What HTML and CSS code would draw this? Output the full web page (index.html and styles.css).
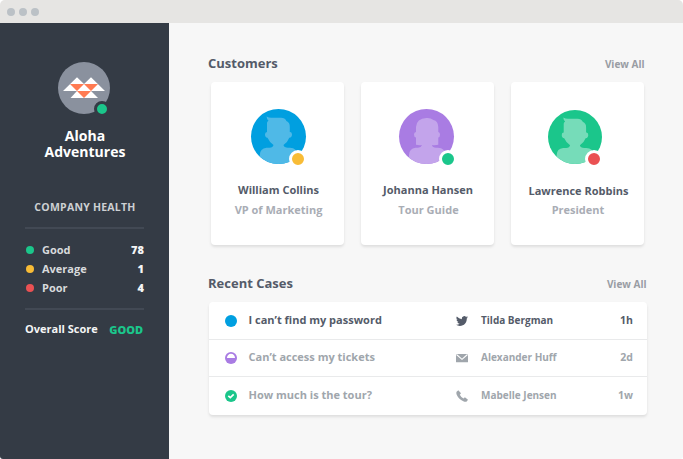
FILE: index.html
```html
<!DOCTYPE html>
<html lang="en">
<head>
<meta charset="utf-8">
<title>Aloha Adventures</title>
<link rel="stylesheet" href="styles.css">
</head>
<body>
<svg class="defs" width="0" height="0" aria-hidden="true">
  <defs>
    <clipPath id="disc"><circle cx="27.5" cy="27.5" r="27.5"/></clipPath>
    <symbol id="man" viewBox="0 0 55 55">
      <path clip-path="url(#disc)" d="M15.6 7.6Q18 9 21 8.8H30Q34 8.8 35.4 12Q39 13.500 38.800 18V23Q41 22.600 41 25.500Q41 28.600 38.300 28.800Q36.500 33.500 32.500 36Q33 38.800 37 38.800H39Q46 39 46.500 46V55H8.800V46Q9 39.500 15.500 38.800H18.500Q22 38.500 22.500 36Q18.300 33 16.500 28.800Q14 28.500 14 25.500Q14 23 16 23V14Q16 12.500 17.500 11.800Q15.600 10 15.600 7.600Z"/>
    </symbol>
    <symbol id="woman" viewBox="0 0 55 55">
      <path clip-path="url(#disc)" d="M27.500 9Q31 8.500 34.500 11Q39 12 39.300 18V23Q41 23 41 25.500Q41 28.300 39.300 28.500V35.800Q36 36.500 33 36Q33.500 38.600 37 38.800H39Q46 39 46.500 46V55H10V46Q10.300 39.500 16.500 38.800H19Q22.300 38.500 23 36Q20 36.500 17 35.800V28.500Q15 28.300 15 25.500Q15 23 17 23V18Q17.500 9.500 27.500 9Z"/>
    </symbol>
  </defs>
</svg>
<div class="window">
  <header class="titlebar"><i></i><i></i><i></i></header>
  <div class="body">
    <aside class="sidebar">
      <div class="logo">
        <svg width="52" height="52" viewBox="0 0 52 52">
          <circle cx="26" cy="26" r="26" fill="#8a919e"/>
          <path fill="#fff" d="M5 29 19 15.300 26 22 33 15.300 47 29Z"/>
          <path fill="#fff" d="M12.500 36 19 29H33L40 36Z"/>
          <path fill="#ff7b52" d="M12 22H26L19 29ZM26 22H40L33 29ZM19 29H33L26 36Z"/>
        </svg>
        <span class="status status-dark good"></span>
      </div>
      <h1>Aloha<br>Adventures</h1>
      <h2>COMPANY HEALTH</h2>
      <ul class="health">
        <li><i class="good"></i><span>Good</span><b>78</b></li>
        <li><i class="average"></i><span>Average</span><b>1</b></li>
        <li><i class="poor"></i><span>Poor</span><b>4</b></li>
      </ul>
      <div class="score"><span>Overall Score</span><strong>GOOD</strong></div>
    </aside>
    <main>
      <div class="heading"><h3>Customers</h3><a class="view">View All</a></div>
      <section class="cards">
        <article class="card">
          <div class="avatar blue"><svg width="55" height="55"><use href="#man"/></svg><span class="status average"></span></div>
          <h4>William Collins</h4><p>VP of Marketing</p>
        </article>
        <article class="card">
          <div class="avatar purple"><svg width="55" height="55"><use href="#woman"/></svg><span class="status good"></span></div>
          <h4>Johanna Hansen</h4><p>Tour Guide</p>
        </article>
        <article class="card card-low">
          <div class="avatar green"><svg width="54" height="54"><use href="#man"/></svg><span class="status poor"></span></div>
          <h4>Lawrence Robbins</h4><p>President</p>
        </article>
      </section>
      <div class="heading heading-cases"><h3>Recent Cases</h3><a class="view">View All</a></div>
      <section class="cases">
        <div class="case active">
          <svg class="state" width="12" height="12"><circle cx="6" cy="6" r="6" fill="#009fe0"/></svg>
          <span class="subject">I can’t find my password</span>
          <svg class="channel" width="12" height="12" viewBox="0 0 24 24"><path d="M23.950 4.570a10 10 0 0 1-2.820.770 4.960 4.960 0 0 0 2.160-2.720c-.950.550-2 .960-3.130 1.180a4.920 4.920 0 0 0-8.380 4.480A13.900 13.900 0 0 1 1.640 3.160a4.920 4.920 0 0 0 1.520 6.570 4.900 4.900 0 0 1-2.230-.610v.060a4.920 4.920 0 0 0 3.950 4.830 5 5 0 0 1-2.210.080 4.940 4.940 0 0 0 4.600 3.420A9.870 9.870 0 0 1 0 19.540 14 14 0 0 0 7.550 21.750c9.050 0 14-7.500 14-13.980l-.020-.640a10 10 0 0 0 2.420-2.560z"/></svg>
          <span class="person">Tilda Bergman</span><span class="age">1h</span>
        </div>
        <div class="case">
          <svg class="state" width="12" height="12"><circle cx="6" cy="6" r="6" fill="#a97ce3"/><path d="M1.900 6Q2.400 2 6 1.800Q9.600 2 10.100 6Z" fill="#fff"/></svg>
          <span class="subject">Can’t access my tickets</span>
          <svg class="channel" width="12" height="12" viewBox="0 0 12 12"><rect y="2" width="12" height="8.300" rx=".6"/><path d="M.5 2.500 6 7.300 11.500 2.500" fill="none" stroke="#fff" stroke-width="1.100"/></svg>
          <span class="person">Alexander Huff</span><span class="age">2d</span>
        </div>
        <div class="case">
          <svg class="state" width="12" height="12"><circle cx="6" cy="6" r="6" fill="#1bc68b"/><path d="M3.300 5.900 5.300 7.700 8.700 4.400" fill="none" stroke="#fff" stroke-width="1.700"/></svg>
          <span class="subject">How much is the tour?</span>
          <svg class="channel" width="12" height="12" viewBox="0 0 12 12"><path d="M.6 1.800 2.300.2 5 3.300 3.800 4.700Q5 7.200 7.500 8.400L8.900 7.200 12 9.800 10.700 11.500Q9.500 12.300 7.300 11.300Q2.500 9 .6 4.500Q.1 3 .6 1.800Z"/></svg>
          <span class="person">Mabelle Jensen</span><span class="age">1w</span>
        </div>
      </section>
    </main>
  </div>
</div>
</body>
</html>
```

FILE: styles.css
```css
* { box-sizing: border-box; }
body { margin: 0; background: #fff; font-family: "Open Sans", "Noto Sans", sans-serif; font-weight: 700; color: #545b69; }
h1, h2, h3, h4, p, ul { margin: 0; padding: 0; font-weight: 700; }
svg { display: block; }
.defs { position: absolute; }
.window { width: 683px; height: 459px; border-radius: 5px 5px 3px 3px; overflow: hidden; background: #f7f7f7; }
.titlebar { height: 23px; background: #e6e5e3; display: flex; gap: 4px; padding: 8px 0 0 7px; }
.titlebar i { width: 8px; height: 8px; border-radius: 50%; background: #bbc1c6; }
.body { display: flex; height: 436px; }
.good { background: #1bc68b; }
.average { background: #f8bc36; }
.poor { background: #ea5153; }

.sidebar { width: 169px; background: #343b45; color: #f4f5f5; padding: 39px 25px 0; }
.logo { position: relative; width: 52px; margin-left: 33px; }
.status { position: absolute; left: 38px; top: 41px; width: 18px; height: 18px; border: 3px solid #fff; border-radius: 50%; }
.status-dark { left: 36px; top: 39px; width: 16px; height: 16px; border-color: #343b45; }
.sidebar h1 { margin-top: 14px; padding-left: 1px; font-size: 14px; line-height: 16px; color: #fff; text-align: center; }
.sidebar h2 { margin-top: 39px; padding-left: 1px; font-size: 10.5px; letter-spacing: .25px; line-height: 16px; color: #cdd0d3; text-align: center; white-space: nowrap; }
.health { list-style: none; margin-top: 12px; padding: 12px 0 10px; border: solid #424954; border-width: 2px 0; }
.health li { display: flex; align-items: center; height: 19px; font-size: 11px; }
.health i { width: 8px; height: 8px; border-radius: 50%; margin: 0 8px 1px 1px; }
.health span, .health b { padding-bottom: 2px; }
.health span { color: #d8dadc; }
.health b { margin-left: auto; }
.score { display: flex; justify-content: space-between; align-items: center; height: 36px; font-size: 11px; white-space: nowrap; }
.score strong { color: #1bc68b; padding: 2px 1px 0 0; }

main { flex: 1; padding: 30px 36px 0 39px; }
.heading { display: flex; justify-content: space-between; align-items: center; height: 20px; padding-right: 3px; }
.heading h3 { font-size: 13px; line-height: 20px; }
.view { font-size: 10px; color: #999da4; padding-top: 1px; margin-right: -.5px; }
.cards { display: flex; gap: 17px; margin: 9px 0 0 3px; }
.card { width: 133px; height: 163px; padding-top: 27px; background: #fff; border-radius: 4px; box-shadow: 0 2px 3px rgba(0,0,0,.1); text-align: center; white-space: nowrap; }
.avatar { position: relative; width: 55px; height: 55px; margin: 0 auto 18px 40px; border-radius: 50%; }
.card:nth-child(2) .avatar { margin-left: 38px; }
.card:nth-child(2) .status { left: 40px; }
.blue { background: #009fe0; }
.blue svg { fill: #4fb9e7; }
.purple { background: #a97ce3; }
.purple svg { fill: #c3a4eb; }
.green { background: #1bc68b; }
.green svg { fill: #76dcb9; }
.card h4 { font-size: 11px; line-height: 16px; padding-left: 2px; }
.card p { font-size: 11px; line-height: 16px; margin-top: 4px; padding-left: 2px; color: #a9adb5; }
.card:nth-child(2) h4 { padding-left: 1px; }
.card-low { padding-top: 28px; }
.card-low .avatar { width: 54px; height: 54px; margin-left: 37px; margin-bottom: 19px; }
.card-low .status { left: 37px; top: 40px; }
.card-low p { margin-top: 3px; padding-left: 1px; }
.heading-cases { margin-top: 28px; padding-right: 1px; }
.cases { width: 438px; height: 113px; margin: 9px 0 0 1px; background: #fff; border-radius: 4px; box-shadow: 0 2px 3px rgba(0,0,0,.1); }
.case { display: grid; grid-template-columns: 23.500px 207.500px 25px 1fr auto; align-items: center; height: 37px; padding: 0 14px 0 16px; font-size: 11px; color: #a0a6ac; fill: #a0a6ac; white-space: nowrap; }
.case + .case { border-top: 1px solid #e9eaeb; }
.case:nth-child(3) { height: 39px; }
.case.active { height: 37px; color: #545b69; fill: #545b69; }
.case span { padding-bottom: 2px; }
.case + .case .subject { padding-bottom: 3px; }
.channel { margin-left: -.5px; }
.person { font-size: 10px; }
.age { font-size: 10.5px; }
```
